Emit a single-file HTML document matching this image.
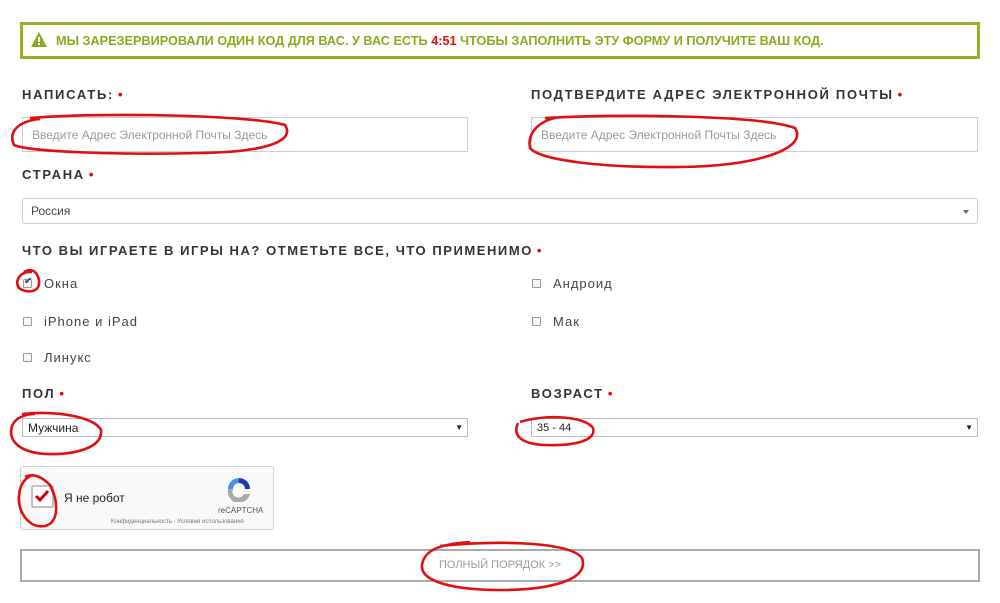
<!DOCTYPE html>
<html><head><meta charset="utf-8"><style>
*{box-sizing:border-box;margin:0;padding:0}
body{width:1000px;height:603px;background:#fff;font-family:"Liberation Sans",sans-serif;position:relative;overflow:hidden;color:#333}
.a{position:absolute}
.banner{left:20px;top:22px;width:960px;height:37px;border:3px solid #93b22a;}
.banner span.t{position:absolute;left:33px;top:9px;font-size:12.7px;font-weight:bold;color:#8aab1e;white-space:nowrap}
.lbl{font-size:13px;font-weight:bold;letter-spacing:1.7px;color:#333;white-space:nowrap}
.lbl i{color:#e00;font-style:normal;margin-left:4px}
.inp{border:1px solid #ccc;background:#fff;font-size:12px;color:#999;padding-left:9px;display:flex;align-items:center}
.sel{border:1px solid #bbb;font-size:12px;color:#222;padding-left:5px;display:flex;align-items:center}
.cb{width:9px;height:9px;border:1px solid #999;border-radius:1px;background:#f6f6f6}
.ct{font-size:13px;letter-spacing:1px;color:#444}
</style></head><body>
<div class="a banner"><svg class="a" style="left:8px;top:7px" width="16" height="15" viewBox="0 0 16 15"><path d="M8 0L16 15H0Z" fill="#8aab1e"/><rect x="7" y="5" width="2" height="5" fill="#fff"/><rect x="7" y="11" width="2" height="2" fill="#fff"/></svg><span class="t">МЫ ЗАРЕЗЕРВИРОВАЛИ ОДИН КОД ДЛЯ ВАС. У ВАС ЕСТЬ <b style="color:#e01010">4:51</b> ЧТОБЫ ЗАПОЛНИТЬ ЭТУ ФОРМУ И ПОЛУЧИТЕ ВАШ КОД.</span></div>

<div class="a lbl" style="left:22px;top:87px">НАПИСАТЬ:<i>•</i></div>
<div class="a lbl" style="left:531px;top:87px">ПОДТВЕРДИТЕ АДРЕС ЭЛЕКТРОННОЙ ПОЧТЫ<i>•</i></div>
<div class="a inp" style="left:22px;top:117px;width:446px;height:35px">Введите Адрес Электронной Почты Здесь</div>
<div class="a inp" style="left:531px;top:117px;width:447px;height:35px">Введите Адрес Электронной Почты Здесь</div>

<div class="a lbl" style="left:22px;top:167px">СТРАНА<i>•</i></div>
<div class="a sel" style="left:22px;top:198px;width:956px;height:26px;border-color:#ccc;border-radius:3px;padding-left:8px;color:#444">Россия<span class="a" style="right:8px;top:11px;border-left:3px solid transparent;border-right:3px solid transparent;border-top:4px solid #666"></span></div>

<div class="a lbl" style="left:22px;top:243px;letter-spacing:1.55px">ЧТО ВЫ ИГРАЕТЕ В ИГРЫ НА? ОТМЕТЬТЕ ВСЕ, ЧТО ПРИМЕНИМО<i>•</i></div>
<div class="a cb" style="left:23px;top:279px"></div><div class="a" style="left:24px;top:276px;font-size:10px">✔</div><div class="a ct" style="left:44px;top:276px">Окна</div>
<div class="a cb" style="left:532px;top:279px"></div><div class="a ct" style="left:553px;top:276px">Андроид</div>
<div class="a cb" style="left:23px;top:317px"></div><div class="a ct" style="left:44px;top:314px">iPhone и iPad</div>
<div class="a cb" style="left:532px;top:317px"></div><div class="a ct" style="left:553px;top:314px">Мак</div>
<div class="a cb" style="left:23px;top:353px"></div><div class="a ct" style="left:44px;top:350px">Линукс</div>

<div class="a lbl" style="left:22px;top:386px">ПОЛ<i>•</i></div>
<div class="a lbl" style="left:531px;top:386px">ВОЗРАСТ<i>•</i></div>
<div class="a sel" style="left:22px;top:418px;width:446px;height:19px">Мужчина<span class="a" style="right:4px;top:4px;font-size:8px">▼</span></div>
<div class="a sel" style="left:531px;top:418px;width:447px;height:19px;font-size:11px">35 - 44<span class="a" style="right:4px;top:4px;font-size:8px">▼</span></div>

<div class="a" style="left:20px;top:466px;width:254px;height:64px;border:1px solid #d3d3d3;border-radius:3px;background:#f9f9f9"></div>
<div class="a" style="left:31px;top:485px;width:23px;height:23px;border:2px solid #c1c1c1;background:#fff;border-radius:2px"></div>
<svg class="a" style="left:34px;top:489px" width="16" height="14"><path d="M2 7L6 11L14 2" stroke="#d0021b" stroke-width="3" fill="none"/></svg>
<div class="a" style="left:64px;top:491px;font-size:12px;color:#222">Я не робот</div>
<svg class="a" style="left:226px;top:476px" width="26" height="26" viewBox="0 0 26 26"><path d="M13 2A11 11 0 0 1 24 13H19A6 6 0 0 0 13 7Z" fill="#1c3aa9"/><path d="M13 2A11 11 0 0 0 2 13H7A6 6 0 0 1 13 7Z" fill="#4a90e2"/><path d="M2 13A11 11 0 0 0 24 18H18A6 6 0 0 1 7 13Z" fill="#aaa"/></svg>
<div class="a" style="left:218px;top:506px;font-size:8px;color:#555">reCAPTCHA</div>
<div class="a" style="left:111px;top:519px;font-size:6px;color:#777">Конфиденциальность - Условия использования</div>

<div class="a" style="left:20px;top:549px;width:960px;height:33px;border:2px solid #aaa"></div>
<div class="a" style="left:0;top:559px;width:1000px;text-align:center;font-size:11px;color:#999">ПОЛНЫЙ ПОРЯДОК &gt;&gt;</div>

<svg class="a" style="left:0;top:0" width="1000" height="603" fill="none" stroke="#e01010" stroke-width="2.6">
<path d="M30 118C100 112 250 115 285 125C295 140 270 152 200 153C120 155 30 152 14 145C8 132 18 121 40 119"/>
<path d="M545 118C620 114 760 115 795 128C808 148 760 166 680 167C600 168 540 160 530 148C527 132 540 120 560 117"/>
<path d="M24 272C34 266 40 276 39 284C38 293 25 293 19 288C14 281 20 271 32 272"/>
<path d="M22 414C60 410 95 418 101 430C103 448 75 455 45 454C18 452 8 440 12 426C15 418 25 414 35 414"/>
<path d="M520 422C545 414 585 416 593 428C597 442 570 446 545 445C522 444 512 436 518 423"/>
<path d="M25 477C35 472 44 479 50 485C58 500 60 522 45 526C28 529 17 510 19 495C20 485 24 478 33 475"/>
<path d="M440 546C500 540 570 542 582 558C590 580 550 590 500 590C455 590 420 582 422 565C424 550 440 544 470 542"/>
</svg>
</body></html>
